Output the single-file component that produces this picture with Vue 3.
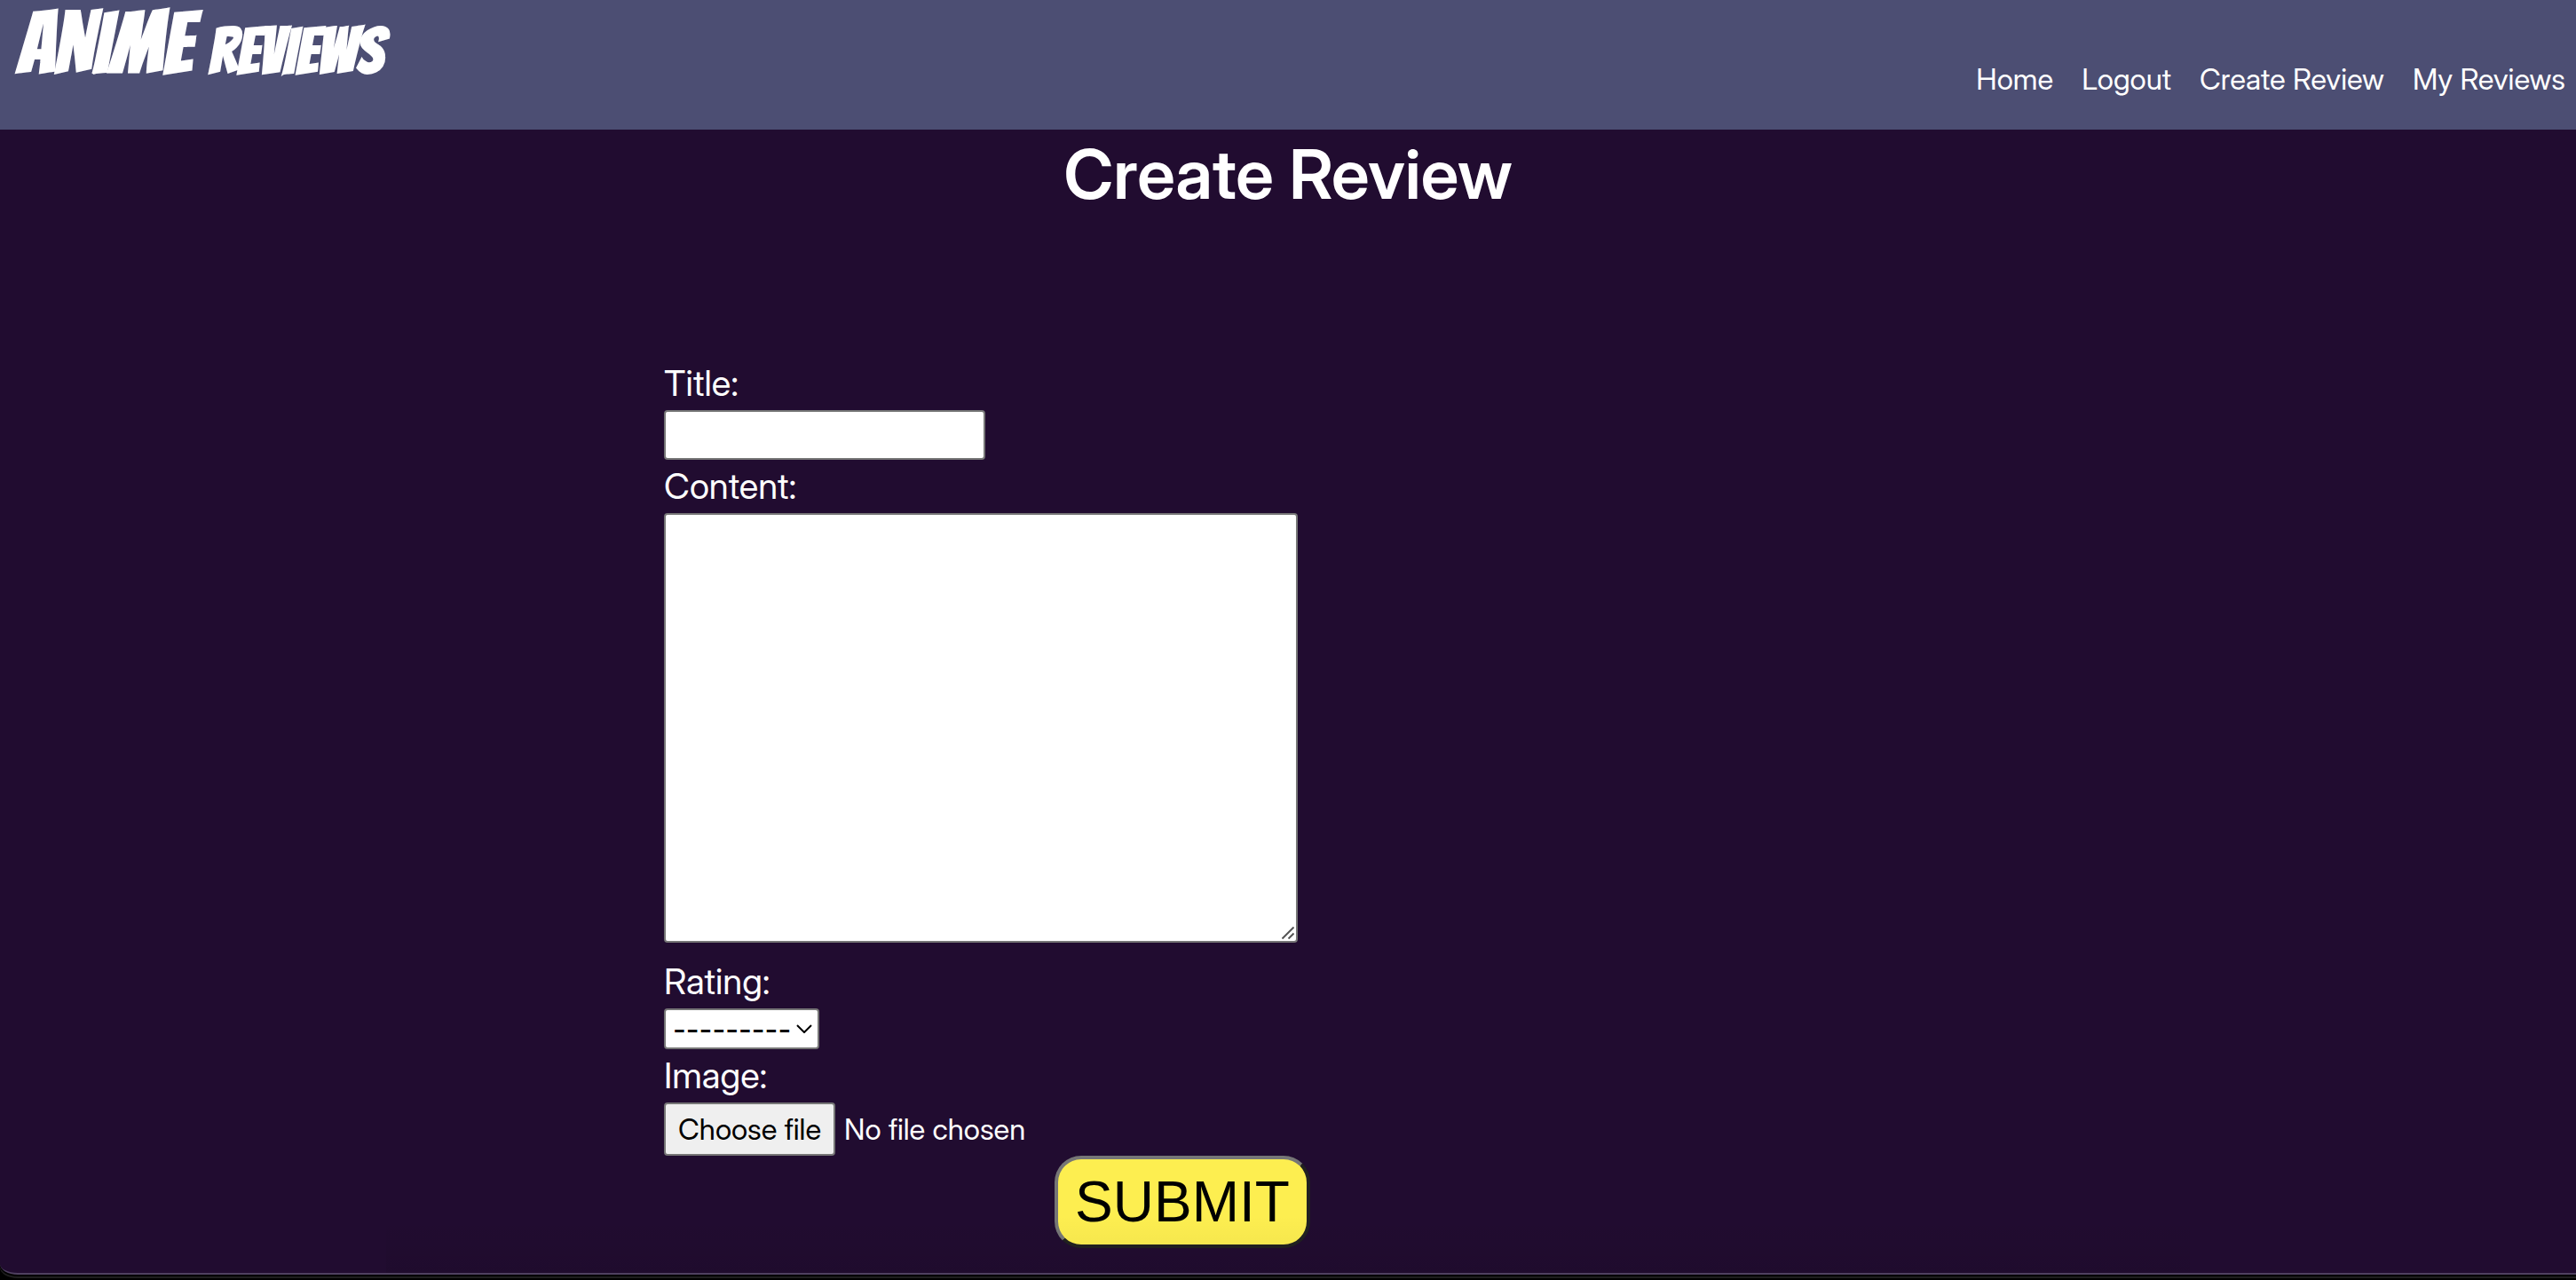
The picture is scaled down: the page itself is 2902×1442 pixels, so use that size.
<script setup>
import { ref } from 'vue'

const links = ['Home', 'Logout', 'Create Review', 'My Reviews']
const title = ref('')
const content = ref('')
const rating = ref('')
const fileName = ref('No file chosen')

function pickFile(event) {
  const file = event.target.files[0]
  fileName.value = file ? file.name : 'No file chosen'
}
</script>

<template>
  <div class="desktop">
    <div class="page">
      <header class="header">
        <a class="logo" href="#">ANIME <span class="logo-small">REVIEWS</span></a>
        <nav class="nav">
          <a v-for="link in links" :key="link" href="#">{{ link }}</a>
        </nav>
      </header>

      <main>
        <h1>Create Review</h1>
        <form class="form" @submit.prevent>
          <label for="title">Title:</label>
          <input id="title" v-model="title" class="field title" type="text" />

          <label for="content">Content:</label>
          <div class="content-wrap">
            <textarea id="content" v-model="content" class="field content"></textarea>
            <svg class="grip" viewBox="0 0 14 14" aria-hidden="true">
              <path d="M0.5 13.5L13.5 0.5M7.5 13.5L13.5 7.5" />
            </svg>
          </div>

          <label for="rating">Rating:</label>
          <div class="select-wrap">
            <select id="rating" v-model="rating" class="field rating">
              <option value="">---------</option>
              <option v-for="n in 5" :key="n" :value="n">{{ n }}</option>
            </select>
            <svg class="chevron" viewBox="0 0 18 10" aria-hidden="true">
              <path d="M1 1L9 9L17 1" />
            </svg>
          </div>

          <label for="image">Image:</label>
          <div class="file">
            <span class="field choose">Choose file</span>
            <span>{{ fileName }}</span>
            <input id="image" class="file-input" type="file" @change="pickFile" />
          </div>

          <button class="submit" type="submit">SUBMIT</button>
        </form>
      </main>
      <div class="shade"></div>
    </div>
  </div>
</template>

<style>
body {
  margin: 0;
  background: #000;
}
</style>

<style scoped>
.desktop {
  box-sizing: border-box;
  min-height: 100vh;
  padding-bottom: 6px;
  display: flex;
  flex-direction: column;
  background: #000;
  font-family: "Inter Display", Inter, sans-serif;
  color: #fff;
}

.page {
  position: relative;
  flex: 1;
  background: #210c30;
  border-bottom: 2px solid #4f4060;
  border-bottom-left-radius: 20px 12px;
  box-shadow: 0 2px 0 #000, 0 4px 0 #1e1e1e;
}

.header {
  box-sizing: border-box;
  height: 146px;
  padding: 0 12px 0 20px;
  display: flex;
  justify-content: space-between;
  align-items: flex-start;
  background: #4c4e73;
}

.logo {
  font-family: Bangers, sans-serif;
  font-size: 96px;
  line-height: 98px;
  font-weight: 400;
  -webkit-text-stroke: 2px #fff;
  white-space: nowrap;
  color: #fff;
  text-decoration: none;
}

.logo-small {
  font-size: 72px;
}

.nav {
  display: flex;
  gap: 32px;
  padding-top: 69px;
}

.nav a {
  font-size: 33px;
  line-height: 40px;
  color: #fff;
  text-decoration: none;
}

h1 {
  margin: 0;
  padding-top: 2px;
  text-align: center;
  font-size: 77px;
  line-height: 96px;
  font-weight: 600;
}

.form {
  width: 728px;
  margin-left: calc(50% - 703px);
  padding-top: 158px;
  display: flex;
  flex-direction: column;
  align-items: flex-start;
}

.form label {
  font-size: 40px;
  line-height: 48px;
  padding: 6px 0;
}

.field {
  box-sizing: border-box;
  display: block;
  margin: 0;
  border: 2px solid #767676;
  border-radius: 4px;
  background: #fff;
  color: #000;
  font-family: Inter, sans-serif;
  font-size: 32px;
}

.title {
  width: 362px;
  height: 56px;
}

.content-wrap,
.select-wrap {
  position: relative;
}

.content-wrap {
  margin-bottom: 14px;
}

.content {
  width: 714px;
  height: 484px;
  resize: none;
}

.grip {
  position: absolute;
  right: 4px;
  bottom: 4px;
  width: 14px;
  height: 14px;
  fill: none;
  stroke: #555;
  stroke-width: 2;
}

.rating {
  appearance: none;
  width: 175px;
  height: 46px;
  padding: 0 8px;
  font-weight: 500;
}

.chevron {
  position: absolute;
  right: 8px;
  top: 18px;
  width: 18px;
  height: 10px;
  fill: none;
  stroke: #000;
  stroke-width: 2;
  pointer-events: none;
}

.file {
  position: relative;
  display: flex;
  align-items: center;
  gap: 10px;
  font-size: 33px;
}

.choose {
  height: 60px;
  padding: 0 14px;
  line-height: 56px;
  background: #efefef;
  font-family: inherit;
  font-size: 33px;
}

.file-input {
  position: absolute;
  inset: 0;
  width: 100%;
  opacity: 0;
}

.submit {
  align-self: flex-end;
  width: 288px;
  height: 104px;
  padding: 0;
  border: 4px solid;
  border-color: #767676 #212121 #212121 #767676;
  border-radius: 30px;
  background: #fdee50;
  color: #000;
  font-family: "Liberation Sans", sans-serif;
  font-size: 64px;
}

.shade {
  position: absolute;
  left: 15%;
  right: 15%;
  bottom: 0;
  height: 64px;
  background: linear-gradient(transparent, rgba(0, 0, 0, 0.06));
  pointer-events: none;
}
</style>
